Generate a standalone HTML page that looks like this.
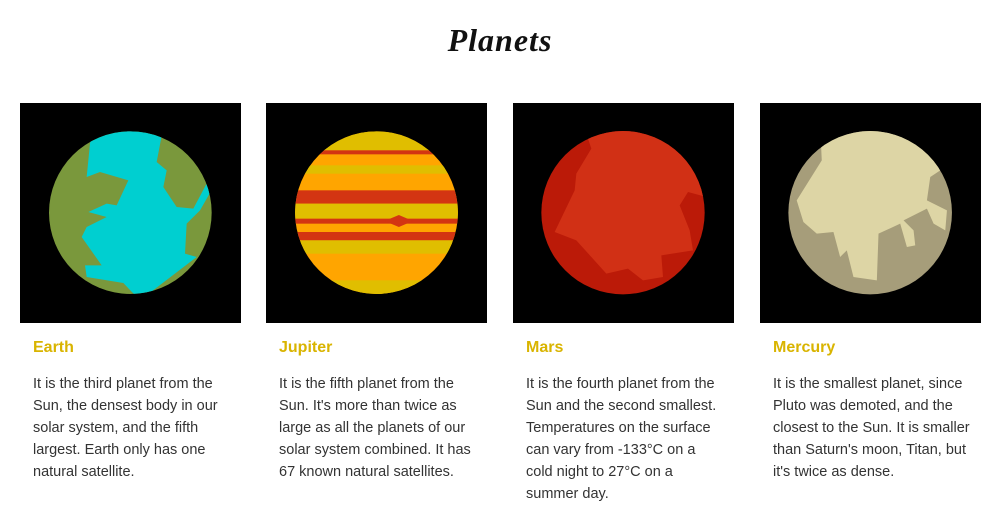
<!DOCTYPE html>
<html><head><meta charset="utf-8"><style>
body{margin:0;width:1000px;height:528px;background:#fff;font-family:"Liberation Sans",sans-serif;position:relative;overflow:hidden}
h1{position:absolute;left:0;width:1000px;top:22px;margin:0;text-align:center;font-family:"Liberation Serif",serif;font-style:italic;font-weight:bold;font-size:32px;color:#111;letter-spacing:1px}
.card{position:absolute;top:103px;width:221px}
.card svg{display:block;width:221px;height:220px}
.card h2{margin:0;position:absolute;left:13px;top:236px;font-size:16px;font-weight:bold;color:#D9B400}
.card p{margin:0;position:absolute;left:13px;top:270px;width:196px;font-size:14.5px;line-height:22px;color:#333}
</style></head><body>
<h1>Planets</h1>

<div class="card" style="left:20px">
<svg viewBox="60 38 663 660" preserveAspectRatio="none">
<defs><clipPath id="c1"><circle cx="391" cy="367" r="244"/></clipPath></defs>
<rect x="60" y="38" width="663" height="660" fill="#000"/>
<g clip-path="url(#c1)">
<rect x="100" y="100" width="600" height="560" fill="#7A983C"/>
<polygon fill="#00CFD0" points="280,110 490,110 470,215 500,240 490,290 530,350 580,355 620,280 640,290 600,360 560,400 555,490 590,500 420,630 370,578 260,560 255,525 305,525 245,440 260,410 320,380 265,365 320,340 350,345 385,270 300,245 260,260 270,160"/>
</g></svg>
<h2>Earth</h2>
<p>It is the third planet from the Sun, the densest body in our solar system, and the fifth largest. Earth only has one natural satellite.</p>
</div>

<div class="card" style="left:266px">
<svg viewBox="800 38 662 660" preserveAspectRatio="none">
<defs><clipPath id="c2"><circle cx="1131" cy="367" r="244"/></clipPath></defs>
<rect x="800" y="38" width="662" height="660" fill="#000"/>
<g clip-path="url(#c2)">
<rect x="880" y="110" width="510" height="520" fill="#FFA500"/>
<rect x="880" y="110" width="510" height="70" fill="#E0BE00"/>
<rect x="880" y="180" width="510" height="12" fill="#D33512"/>
<rect x="880" y="225" width="510" height="25" fill="#E0BE00"/>
<rect x="880" y="300" width="510" height="40" fill="#D33512"/>
<rect x="880" y="340" width="510" height="45" fill="#E0BE00"/>
<rect x="880" y="385" width="510" height="15" fill="#D33512"/>
<polygon points="1155,392 1198,374 1240,392 1198,410" fill="#D33512"/>
<rect x="880" y="425" width="510" height="25" fill="#D33512"/>
<rect x="880" y="450" width="510" height="40" fill="#E0BE00"/>
<rect x="880" y="570" width="510" height="60" fill="#E0BE00"/>
</g></svg>
<h2>Jupiter</h2>
<p>It is the fifth planet from the Sun. It's more than twice as large as all the planets of our solar system combined. It has 67 known natural satellites.</p>
</div>

<div class="card" style="left:513px">
<svg viewBox="40 38 663 660" preserveAspectRatio="none">
<defs><clipPath id="c3"><circle cx="370" cy="367" r="245"/></clipPath></defs>
<rect x="40" y="38" width="663" height="660" fill="#000"/>
<g clip-path="url(#c3)">
<rect x="100" y="100" width="560" height="560" fill="#BB1A08"/>
<polygon fill="#D13015" points="250,100 275,175 230,250 225,300 165,425 230,450 320,550 385,535 430,570 490,560 485,495 580,480 570,420 540,345 565,305 620,320 640,100"/>
</g></svg>
<h2>Mars</h2>
<p>It is the fourth planet from the Sun and the second smallest. Temperatures on the surface can vary from -133°C on a cold night to 27°C on a summer day.</p>
</div>

<div class="card" style="left:760px">
<svg viewBox="780 38 662 660" preserveAspectRatio="none">
<defs><clipPath id="c4"><circle cx="1110" cy="367" r="245"/></clipPath></defs>
<rect x="780" y="38" width="662" height="660" fill="#000"/>
<g clip-path="url(#c4)">
<rect x="840" y="100" width="540" height="560" fill="#A69D7A"/>
<polygon fill="#DDD5A5" points="960,100 965,210 890,330 910,395 950,430 1000,425 1020,500 1040,480 1060,560 1130,570 1135,430 1200,400 1220,470 1245,465 1240,420 1210,390 1280,355 1300,400 1335,420 1340,360 1280,330 1290,260 1320,240 1300,100"/>
</g></svg>
<h2>Mercury</h2>
<p style="width:212px">It is the smallest planet, since Pluto was demoted, and the closest to the Sun. It is smaller than Saturn's moon, Titan, but it's twice as dense.</p>
</div>
</body></html>
